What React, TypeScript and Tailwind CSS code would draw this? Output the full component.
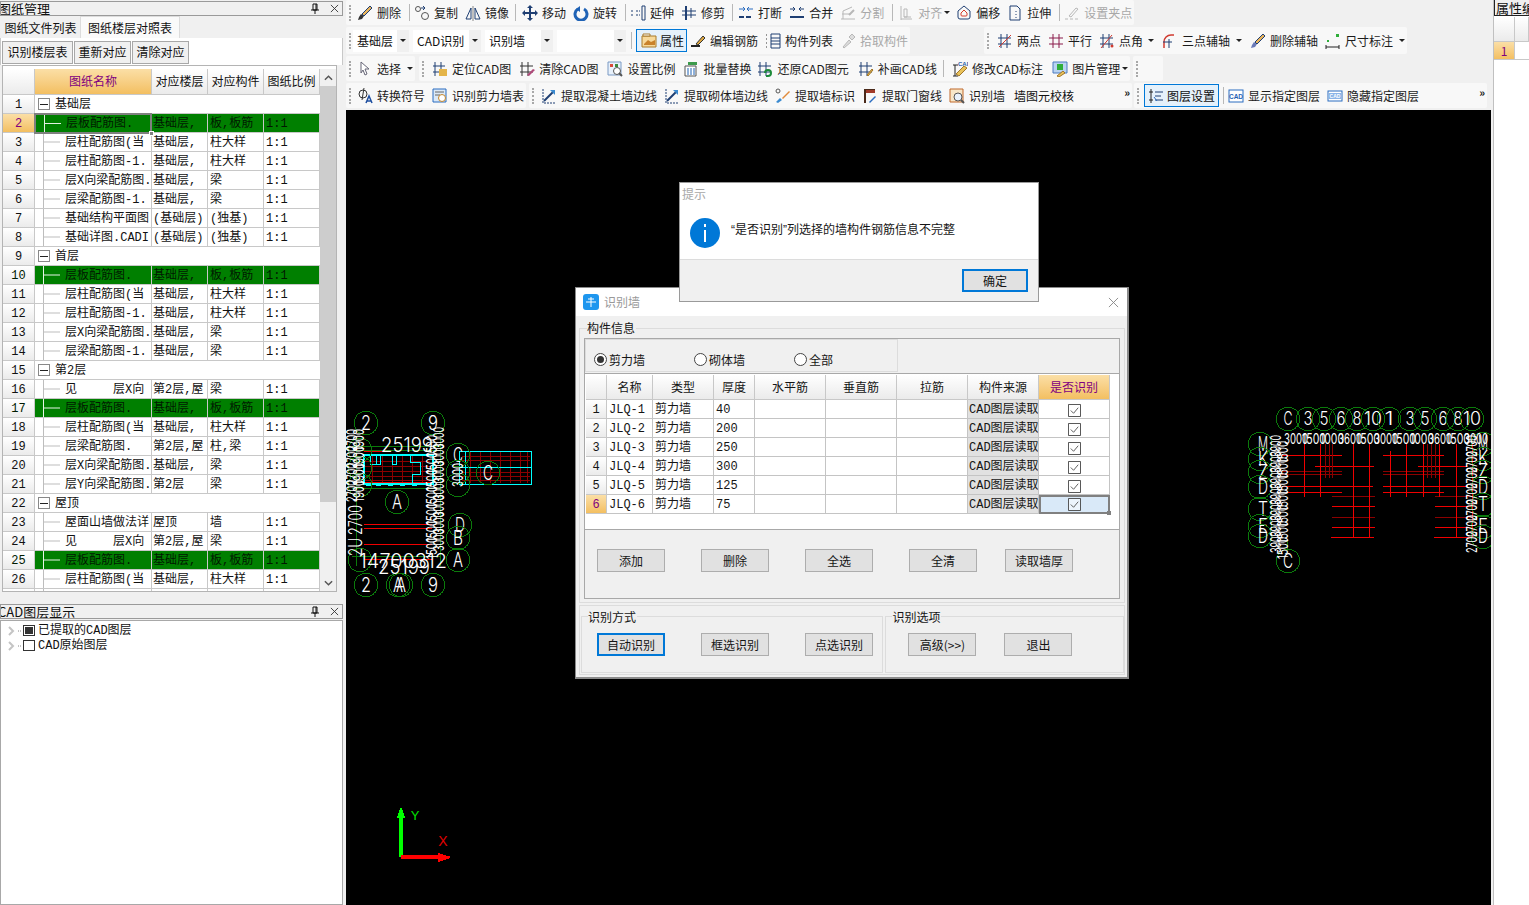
import type { ReactNode } from "react";

const NAVY = "#1f3f73";
const GREY = "#b8b8b8";

// small 16x16 toolbar drawings
const icons: Record<string, ReactNode> = {
  brush: (<><path d="M1 15l4-1 2-3-3-2-2 3z" fill="#333" /><path d="M5 9l8-8 2 2-8 8z" fill="#e8b45c" stroke={NAVY} /></>),
  copy: (<><circle cx="4" cy="4" r="2.5" fill="none" stroke="#555" /><circle cx="11" cy="11" r="3.5" fill="none" stroke="#555" /><path d="M7 3h4M9 1l2 2-2 2" stroke={NAVY} fill="none" /></>),
  mirror: (<><path d="M1 14L6 3v11zM15 14L10 3v11z" fill="none" stroke={NAVY} /><path d="M8 1v15" stroke="#888" /></>),
  move: (<path d="M8 0l3 3H9v4h4V5l3 3-3 3V9H9v4h2l-3 3-3-3h2V9H3v2L0 8l3-3v2h4V3H5z" fill={NAVY} />),
  rotate: (<><path d="M5 4a6 6 0 1 0 6 0" fill="none" stroke="#1f62b5" strokeWidth="3" /><path d="M7 1v6L3 4z" fill="#1f62b5" /></>),
  extend: (<><path d="M1 6h3M1 10h3M6 6h4M6 10h4" stroke={NAVY} strokeDasharray="2 1" /><path d="M12 1h3v14h-3z" fill="none" stroke={NAVY} /></>),
  trim: (<><path d="M5 1v14" stroke={NAVY} strokeWidth="2" /><path d="M10 3v10" stroke={NAVY} /><path d="M1 6h14M1 10h14" stroke={NAVY} /></>),
  breakl: (<><path d="M1 12h14" stroke={NAVY} strokeWidth="2" strokeDasharray="5 2" /><path d="M1 4h5M10 4h5M5 2l2 2-2 2M11 2L9 4l2 2" stroke="#2a6cc0" fill="none" /></>),
  merge: (<><path d="M1 12h14" stroke={NAVY} strokeWidth="2" /><path d="M1 4h5M10 4h5M4 2l2 2-2 2M12 2l-2 2 2 2" stroke={NAVY} fill="none" /></>),
  split: (<><path d="M1 14h14M2 9h9M3 14V6l9-4" stroke={GREY} fill="none" /><path d="M9 10l5-5" stroke={GREY} strokeWidth="2" /></>),
  align: (<path d="M3 1v14M3 14h11M6 4h3v8H6zM6 12h7" stroke={GREY} fill="none" />),
  offset: (<><path d="M8 1l6 5v6a2 2 0 0 1-2 2H4a2 2 0 0 1-2-2V6z" fill="none" stroke={NAVY} /><path d="M8 5l3 3v2a1 1 0 0 1-1 1H6a1 1 0 0 1-1-1V8z" fill="none" stroke="#d43c2c" /></>),
  stretch: (<><path d="M3 1h7l3 3v11H3z" fill="none" stroke={NAVY} /><path d="M9 6v7" stroke={NAVY} strokeDasharray="1 2" /></>),
  grip: (<><path d="M1 14h3M6 14h3M11 14h3" stroke={GREY} /><path d="M5 11l7-8 2 1-7 8z" fill="none" stroke={GREY} /></>),
  attr: (<><path d="M1 3h14v11H1z" fill="#f7d99a" stroke="#a87a2a" /><path d="M3 11l4-4 3 2 4-2v5H3z" fill="#c9822a" /><path d="M2 1h7v2H2z" fill="#fff" stroke="#a87a2a" /></>),
  rebar: (<><path d="M1 13h9" stroke="#222" strokeWidth="2" /><path d="M6 11l7-8 2 2-7 7z" fill="#e0a840" stroke="#333" /></>),
  list: (<><path d="M1 2h2M1 6h2M1 10h2M1 14h2" stroke="#333" strokeDasharray="1 1" /><path d="M6 1h9v14H6zM6 5h9M6 8h9M6 11h9" fill="none" stroke={NAVY} /></>),
  picker: (<path d="M3 14l6-7 2 2-7 6zM9 4l3-3 3 3-3 3z" fill="#ddd" stroke={GREY} />),
  twop: (<><path d="M4 1v14M10 1v14M1 5h13M1 11h13" stroke={NAVY} /><path d="M2 14L14 2" stroke="#d03a30" /></>),
  parallel: (<path d="M5 1v14M11 1v14M1 5h14M1 11h14" stroke="#8a1a4a" />),
  angle: (<><path d="M4 1v14M10 1v14M1 5h13M1 11h13" stroke={NAVY} /><path d="M2 15L13 2" stroke="#d03a30" /><circle cx="13" cy="13" r="1.5" fill="#d03a30" /></>),
  arc: (<><path d="M2 15V9a7 7 0 0 1 7-7h3" fill="none" stroke="#d03a30" strokeWidth="1.5" /><path d="M7 6v9M1 9h9" stroke={NAVY} /></>),
  delax: (<><path d="M1 15l4-1 2-3-3-2-2 3z" fill="#6a7ab8" /><path d="M5 9l8-8 2 2-8 8z" fill="#e8b45c" stroke={NAVY} /></>),
  dim: (<><path d="M1 12v4M14 12v4M1 14h13" stroke="#222" /><path d="M2 7h2v2H2zM11 1h3v3h-3z" fill="#2fae3a" /></>),
  select: (<path d="M4 1l8 7H8l2 5-2 1-2-5-2 3z" fill="#fff" stroke="#667" />),
  locate: (<><path d="M3 1v14M9 1v14M1 5h12M1 11h12" stroke={NAVY} /><path d="M7 8h8v7H7z" fill="#e4b54a" /></>),
  clear: (<><path d="M3 1v14M9 1v14M1 5h13M1 11h13" stroke="#333" /><path d="M8 14l6-6 2 1-6 6z" fill="#b04a7a" /></>),
  scale: (<><path d="M1 1h13v13H1z" fill="#e8f1fb" stroke="#7a9ac4" /><path d="M3 3h3v3H3z" fill="#d94a3a" /><path d="M8 3h3v3H8z" fill="#3c8a3c" /><circle cx="10" cy="10" r="3.5" fill="#fff" stroke="#555" /><path d="M12 12l3 3" stroke="#555" strokeWidth="2" /></>),
  batch: (<><path d="M2 5h11v10H2z" fill="#fff" stroke="#555" /><path d="M5 7v7M8 7v7M11 7v7" stroke="#1f62b5" /><path d="M5 1h9v3H5z" fill="#3c9a4c" /></>),
  restore: (<><path d="M3 1v14M9 1v14M1 5h13M1 11h13" stroke={NAVY} /><path d="M8 12a3 3 0 1 1 3 3H9" fill="none" stroke="#1d8a3a" strokeWidth="2" /></>),
  patch: (<><path d="M3 1v14M9 1v14M1 5h13M1 11h13" stroke={NAVY} /><path d="M9 14l5-6 1 1-5 6z" fill="#e4b54a" stroke="#a0762a" /></>),
  cadedit: (<><path d="M3 4v11M1 4h5M1 15h5" stroke="#222" /><path d="M4 13l8-8 3 2-8 8z" fill="#e9c25a" stroke="#a0762a" /><text x="6" y="5" fontSize="6" fontWeight="700" fill="#2a5ca8" fontFamily="'Liberation Sans', sans-serif">CAD</text></>),
  picture: (<><path d="M1 1h14v11H1z" fill="#b9d3f0" stroke="#4a7ac0" /><path d="M5 3h6v6H5z" fill="#2fae3a" /><path d="M5 15l6-5 2 2-6 4z" fill="#e9c25a" stroke="#a0762a" /></>),
  symbol: (<><circle cx="6" cy="6" r="4" fill="none" stroke="#333" /><path d="M7 0L5 12" stroke="#333" /><path d="M9 15l3-7 3 7M10 13h4" fill="none" stroke="#1f4fa0" strokeWidth="1.5" /></>),
  table: (<><path d="M1 1h13v13H1z" fill="#dbe9f8" stroke="#2a6cc0" /><path d="M3 4h9M3 7h5" stroke="#666" /><circle cx="10" cy="10" r="3.5" fill="#fff" stroke="#c4862a" /></>),
  wall: (<><path d="M2 1v14h13" fill="none" stroke={NAVY} strokeDasharray="2 1" /><path d="M3 13L13 3" stroke={NAVY} strokeWidth="2" /><path d="M9 2h5v5z" fill="#3a8ad0" /></>),
  tag: (<><circle cx="3" cy="3" r="2" fill="none" stroke="#555" /><path d="M1 14l4-4 2 2-4 3z" fill="#3a8ad0" /><path d="M7 10l7-7 1 1-7 7z" fill="#e08a3a" /></>),
  door: (<><path d="M3 15V2h10" fill="none" stroke="#4a2a1a" strokeWidth="2" /><path d="M4 2h9v3H4z" fill="#a03a2a" /><path d="M7 14l6-6 1 1-6 6z" fill="#2a6cc0" /></>),
  recog: (<><path d="M1 1h13v13H1z" fill="#f7e6c8" stroke="#c0682a" /><circle cx="9" cy="9" r="4" fill="#e8f1fb" stroke="#555" /><path d="M12 12l3 3" stroke="#555" strokeWidth="2" /></>),
  layers: (<><path d="M3 1v14M1 4h4M1 12h4" stroke="#222" /><path d="M7 4h8M7 8h6M7 12h8" stroke={NAVY} /><path d="M6 9l3 4" stroke="#2a6cc0" /></>),
  cad1: (<><rect x="1" y="2" width="14" height="12" fill="#fff" stroke="#2a6cc0" /><text x="8" y="10.5" fontSize="6.5" fontWeight="700" textAnchor="middle" fill="#1f62b5" fontFamily="'Liberation Sans', sans-serif">CAD</text></>),
  cad2: (<><rect x="1" y="3" width="14" height="10" fill="#fff" stroke="#2a6cc0" /><rect x="2" y="5" width="12" height="6" fill="#8ab4e8" /><text x="8" y="10" fontSize="5" fontWeight="700" textAnchor="middle" fill="#fff" fontFamily="'Liberation Sans', sans-serif">CAD</text></>),
};

const Ic = ({ n }: { n: string }) => (
  <svg viewBox="0 0 16 16" className="w-[16px] h-[16px] shrink-0">{icons[n]}</svg>
);

const Caret = ({ className = "" }: { className?: string }) => (
  <span className={`w-0 h-0 border-x-[3px] border-x-transparent border-t-[3px] border-t-[#222] ${className}`} />
);

const Sep = ({ className = "" }: { className?: string }) => (
  <span className={`w-px h-[17px] bg-[#b8b8b8] shrink-0 ${className}`} />
);

const Grip = () => (
  <span className="w-[2px] h-[16px] ml-[2px] shrink-0 border-l-2 border-dotted border-[#a8a8a8]" />
);

const Tool = ({ i, t, off, className = "" }: { i: string; t: string; off?: boolean; className?: string }) => (
  <span className={`flex items-center gap-[4px] shrink-0 whitespace-nowrap ${off ? "text-[#a8a8a8]" : "text-[#1c1c1c]"} ${className}`}>
    <Ic n={i} />
    {t}
  </span>
);

const Bar = ({ className = "", children }: { className?: string; children?: ReactNode }) => (
  <div className={`flex items-center h-[25px] bg-[#f8f8f8] rounded-[2px] shrink-0 ${className}`}>{children}</div>
);

const Combo = ({ t, className = "" }: { t: string; className?: string }) => (
  <span className={`flex items-center h-[22px] bg-white pl-[4px] shrink-0 ${className}`}>
    {t}
    <span className="ml-auto w-[12px] h-full bg-[#f0f0f0] flex items-center justify-center">
      <Caret />
    </span>
  </span>
);

const Toolbars = () => (
  <div className="h-[110px] shrink-0 flex flex-col pl-[3px] text-[12px] leading-none">
    <Bar className="w-[788px] mb-[2px] pl-[1px]">
      <Grip />
      <Tool i="brush" t="删除" className="ml-[6px]" />
      <Sep className="ml-[8px]" />
      <Tool i="copy" t="复制" className="ml-[4px]" />
      <Tool i="mirror" t="镜像" className="ml-[7px]" />
      <Sep className="ml-[6px]" />
      <Tool i="move" t="移动" className="ml-[6px]" />
      <Tool i="rotate" t="旋转" className="ml-[7px]" />
      <Sep className="ml-[8px]" />
      <Tool i="extend" t="延伸" className="ml-[4px]" />
      <Tool i="trim" t="修剪" className="ml-[7px]" />
      <Sep className="ml-[7px]" />
      <Tool i="breakl" t="打断" className="ml-[5px]" />
      <Tool i="merge" t="合并" className="ml-[7px]" />
      <Tool i="split" t="分割" off className="ml-[7px]" />
      <Sep className="ml-[8px]" />
      <Tool i="align" t="对齐" off className="ml-[5px]" />
      <Caret className="ml-[2px]" />
      <Tool i="offset" t="偏移" className="ml-[6px]" />
      <Tool i="stretch" t="拉伸" className="ml-[7px]" />
      <Sep className="ml-[8px]" />
      <Tool i="grip" t="设置夹点" off className="ml-[4px]" />
    </Bar>
    <div className="flex h-[27px] mb-[2px]">
      <Bar className="h-[27px] w-[564px] pl-[1px]">
        <Grip />
        <Combo t="基础层" className="w-[56px] ml-[2px]" />
        <Combo t="CAD识别" className="w-[68px] ml-[4px]" />
        <Combo t="识别墙" className="w-[68px] ml-[4px]" />
        <Combo t="" className="w-[69px] ml-[4px]" />
        <Sep className="ml-[5px]" />
        <span className="flex items-center gap-[3px] ml-[4px] w-[51px] h-[23px] pl-[4px] border border-[#0078d7] bg-[#e5f1fb] shrink-0">
          <Ic n="attr" />
          属性
        </span>
        <Tool i="rebar" t="编辑钢筋" className="ml-[3px]" />
        <Tool i="list" t="构件列表" className="ml-[7px]" />
        <Tool i="picker" t="拾取构件" off className="ml-[7px]" />
      </Bar>
      <Bar className="h-[27px] w-[423px] ml-[74px] pl-[1px]">
        <Grip />
        <Tool i="twop" t="两点" className="ml-[8px]" />
        <Tool i="parallel" t="平行" className="ml-[7px]" />
        <Tool i="angle" t="点角" className="ml-[7px]" />
        <Caret className="ml-[5px]" />
        <Tool i="arc" t="三点辅轴" className="ml-[8px]" />
        <Caret className="ml-[6px]" />
        <Tool i="delax" t="删除辅轴" className="ml-[8px]" />
        <Tool i="dim" t="尺寸标注" className="ml-[7px]" />
        <Caret className="ml-[6px]" />
      </Bar>
    </div>
    <div className="flex h-[25px] mb-[2px]">
      <Bar className="w-[69px] pl-[1px]">
        <Grip />
        <Tool i="select" t="选择" className="ml-[6px]" />
        <Caret className="ml-[6px]" />
      </Bar>
      <Bar className="w-[711px] ml-[4px] pl-[1px]">
        <Grip />
        <Tool i="locate" t="定位CAD图" className="ml-[8px]" />
        <Tool i="clear" t="清除CAD图" className="ml-[8px]" />
        <Tool i="scale" t="设置比例" className="ml-[9px]" />
        <Tool i="batch" t="批量替换" className="ml-[8px]" />
        <Tool i="restore" t="还原CAD图元" className="ml-[6px]" />
        <Tool i="patch" t="补画CAD线" className="ml-[9px]" />
        <Sep className="ml-[6px]" />
        <Tool i="cadedit" t="修改CAD标注" className="ml-[8px]" />
        <Tool i="picture" t="图片管理" className="ml-[9px]" />
        <Caret className="ml-[2px]" />
      </Bar>
      <Bar className="w-[30px] ml-[3px] pl-[1px]">
        <Grip />
      </Bar>
    </div>
    <div className="flex h-[25px]">
      <Bar className="w-[180px] pl-[1px]">
        <Grip />
        <Tool i="symbol" t="转换符号" className="ml-[6px]" />
        <Tool i="table" t="识别剪力墙表" className="ml-[7px]" />
      </Bar>
      <Bar className="w-[603px] ml-[3px] pl-[1px]">
        <Grip />
        <Tool i="wall" t="提取混凝土墙边线" className="ml-[7px]" />
        <Tool i="wall" t="提取砌体墙边线" className="ml-[7px]" />
        <Tool i="tag" t="提取墙标识" className="ml-[7px]" />
        <Tool i="door" t="提取门窗线" className="ml-[7px]" />
        <Tool i="recog" t="识别墙" className="ml-[7px]" />
        <span className="ml-[9px] whitespace-nowrap shrink-0">墙图元校核</span>
        <span className="ml-auto mr-[2px] mb-[6px] font-bold text-[11px]">»</span>
      </Bar>
      <Bar className="w-[353px] ml-[2px] pl-[1px]">
        <Grip />
        <span className="flex items-center gap-[3px] ml-[5px] w-[75px] h-[23px] pl-[3px] border border-[#0078d7] bg-[#e5f1fb] shrink-0">
          <Ic n="layers" />
          图层设置
        </span>
        <Sep className="ml-[4px]" />
        <Tool i="cad1" t="显示指定图层" className="ml-[4px]" />
        <Tool i="cad2" t="隐藏指定图层" className="ml-[7px]" />
        <span className="ml-auto mr-[2px] mb-[6px] font-bold text-[11px]">»</span>
      </Bar>
    </div>
  </div>
);

type Row = { g?: string; n?: string; f?: string; c?: string; on?: boolean };

const plate = { n: "层板配筋图.", f: "基础层,", c: "板,板筋", on: true };
const col = { n: "层柱配筋图(当", f: "基础层,", c: "柱大样" };
const col1 = { n: "层柱配筋图-1.", f: "基础层,", c: "柱大样" };
const xb = { n: "层X向梁配筋图.", f: "基础层,", c: "梁" };
const b1 = { n: "层梁配筋图-1.", f: "基础层,", c: "梁" };
const seen = { n: "见     层X向", f: "第2层,屋", c: "梁" };

const rows: Row[] = [
  { g: "基础层" }, plate, col, col1, xb, b1,
  { n: "基础结构平面图", f: "(基础层)", c: "(独基)" },
  { n: "基础详图.CADI", f: "(基础层)", c: "(独基)" },
  { g: "首层" }, plate, col, col1, xb, b1,
  { g: "第2层" }, seen, plate, col,
  { n: "层梁配筋图.", f: "第2层,屋", c: "柱,梁" },
  xb,
  { n: "层Y向梁配筋图.", f: "第2层", c: "梁" },
  { g: "屋顶" },
  { n: "屋面山墙做法详", f: "屋顶", c: "墙" },
  seen, plate, col,
  { n: "层梁配筋图.", f: "第2层,屋", c: "柱,梁" },
];

const headCell = "flex items-center justify-center border-r border-b border-[#c8c8c8] bg-gradient-to-b from-white to-[#ebebeb]";
const orangeCell = "flex items-center justify-center border-r border-b border-[#c8c8c8] bg-gradient-to-b from-[#fbdfa6] to-[#f3bf60] text-[#800080]";
const gridCell = "flex items-center pt-[2px] overflow-hidden whitespace-pre border-r border-b border-[#c8c8c8]";

const Title = ({ t, className = "" }: { t: string; className?: string }) => (
  <div className={`flex items-center h-[15px] border border-[#9a9a9a] text-[13px] leading-none overflow-hidden shrink-0 ${className}`}>
    <span className="flex-1 whitespace-nowrap -ml-[3px]">{t}</span>
    <svg viewBox="0 0 10 12" className="w-[10px] h-[12px] mr-[10px]">
      <path d="M3 1h4v6H3zM1 7h8M5 7v4M6 1v6" stroke="#111" fill="none" />
    </svg>
    <svg viewBox="0 0 10 10" className="w-[9px] h-[9px] mr-[3px]">
      <path d="M1 1l8 8M9 1L1 9" stroke="#333" />
    </svg>
  </div>
);

const TreeLines = ({ on, className = "h-[18px] -mt-[2px]" }: { on?: boolean; className?: string }) => (
  <svg viewBox="0 0 30 18" preserveAspectRatio="none" className={`w-[30px] shrink-0 ${className}`}>
    <path d="M8.5 0v18M9 9h16" stroke={on ? "#e8f4e8" : "#bdbdbd"} />
  </svg>
);

const rowCols = "grid grid-cols-[32px_117px_56px_56px_56px] grid-rows-[19px] h-[19px]";

const LeftPanel = () => (
  <aside className="w-[343px] shrink-0 h-full flex flex-col pt-px text-[12px] leading-none">
    <Title t="图纸管理" />
    <div className="flex items-end h-[22px] pl-[1px] shrink-0">
      <span className="w-[79px] h-[20px] flex items-center justify-center">图纸文件列表</span>
      <span className="w-[100px] h-[22px] flex items-center justify-center bg-[#fafafa] border-x border-t border-[#dcdcdc]">图纸楼层对照表</span>
    </div>
    <div className="h-[27px] bg-white border-x border-[#c8c8c8] flex items-center pl-[1px] pt-px gap-px shrink-0">
      {[["识别楼层表", "w-[71px]"], ["重新对应", "w-[57px]"], ["清除对应", "w-[57px]"]].map(([t, w]) => (
        <span key={t} className={`${w} h-[23px] flex items-center justify-center bg-[#f0f0f0] border border-[#a8a8a8]`}>{t}</span>
      ))}
    </div>
    <div className="h-[527px] ml-[2px] w-[335px] border border-[#b4b4b4] bg-white flex overflow-hidden pt-[3px] shrink-0 [font-family:'Liberation_Mono','Noto_Sans_CJK_SC',monospace]">
      <div className="w-[317px] shrink-0 overflow-hidden">
        <div className="grid grid-cols-[32px_117px_56px_56px_56px] h-[26px] [font-family:'Noto_Sans_CJK_SC',sans-serif]">
          <span className={headCell} />
          <span className={`${orangeCell} pb-[2px]`}>图纸名称</span>
          <span className={`${headCell} pb-[2px]`}>对应楼层</span>
          <span className={`${headCell} pb-[2px]`}>对应构件</span>
          <span className={`${headCell} pb-[2px]`}>图纸比例</span>
        </div>
        {rows.map((r, i) => (
          <div key={i} className={`${rowCols} ${r.on ? "bg-[#007f00] text-[#001a00]" : "text-[#111]"}`}>
            <span className={`${i === 1 ? orangeCell : headCell} pt-[2px]`}>{i + 1}</span>
            {r.g ? (
              <span className="col-span-4 flex items-center gap-[5px] pl-[3px] pt-[2px] border-b border-[#c8c8c8]">
                <span className="w-[12px] h-[12px] -mt-[2px] border border-[#888] flex items-center justify-center">
                  <span className="w-[8px] h-px bg-[#222]" />
                </span>
                {r.g}
              </span>
            ) : (
              <>
                {i === 1 ? (
                  <span className="relative flex items-center whitespace-pre -ml-px -mt-px h-[21px] border-2 border-[#808080]">
                    <TreeLines on={r.on} className="h-[17px]" />
                    {r.n}
                    <span className="absolute -right-[4px] -bottom-[4px] w-[5px] h-[5px] bg-[#808080] border border-white" />
                  </span>
                ) : (
                  <span className={gridCell}>
                    <TreeLines on={r.on} />
                    {r.n}
                  </span>
                )}
                <span className={`${gridCell} pl-px`}>{r.f}</span>
                <span className={`${gridCell} pl-[2px]`}>{r.c}</span>
                <span className={`${gridCell} pl-[2px]`}>1:1</span>
              </>
            )}
          </div>
        ))}
      </div>
      <div className="w-[16px] shrink-0 flex flex-col bg-[#f0f0f0]">
        <span className="h-[17px] flex items-center justify-center shrink-0">
          <svg viewBox="0 0 10 6" className="w-[9px] h-[6px]"><path d="M1 5l4-4 4 4" fill="none" stroke="#555" strokeWidth="1.6" /></svg>
        </span>
        <span className="h-[416px] bg-[#cdcdcd] shrink-0" />
        <span className="flex-1" />
        <span className="h-[17px] flex items-center justify-center shrink-0">
          <svg viewBox="0 0 10 6" className="w-[9px] h-[6px]"><path d="M1 1l4 4 4-4" fill="none" stroke="#555" strokeWidth="1.6" /></svg>
        </span>
      </div>
    </div>
    <Title t="CAD图层显示" className="mt-[12px]" />
    <div className="flex-1 mt-px bg-white border border-[#a8a8a8] pl-[7px] pt-[2px] [font-family:'Liberation_Mono','Noto_Sans_CJK_SC',monospace]">
      {[{ t: "已提取的CAD图层", on: true }, { t: "CAD原始图层", on: false }].map((l) => (
        <div key={l.t} className="flex items-center h-[15px] gap-[1px]">
          <svg viewBox="0 0 14 10" className="w-[14px] h-[10px] shrink-0">
            <path d="M1 1l4 4-4 4" fill="none" stroke="#c4c4c4" strokeWidth="2" />
            <path d="M10 5h3" stroke="#888" strokeDasharray="1 1" />
          </svg>
          <span className="w-[12px] h-[11px] border border-[#333] flex items-center justify-center mr-[2px] shrink-0">
            {l.on && <span className="w-[8px] h-[7px] bg-[#333]" />}
          </span>
          <span className="whitespace-nowrap">{l.t}</span>
        </div>
      ))}
    </div>
  </aside>
);

const Oct = ({ x, y, r = 12 }: { x: number; y: number; r?: number }) => {
  const pts = Array.from({ length: 12 }, (_, i) => {
    const a = (i * Math.PI) / 6 + 0.26;
    return `${(x + r * Math.cos(a)).toFixed(1)},${(y + r * Math.sin(a)).toFixed(1)}`;
  }).join(" ");
  return <polygon points={pts} fill="none" stroke="#0b7a0b" />;
};

// CAD annotation: thin white text squeezed to the given width
const T = ({ x, y, s = 20, r, w, children }: { x: number; y: number; s?: number; r?: number; w?: number; children: string }) => (
  <text
    x={x}
    y={y}
    fontSize={s}
    fill="#fff"
    fontFamily="Inter, 'Liberation Sans', sans-serif"
    fontWeight={s <= 15 ? 400 : 300}
    textAnchor="middle"
    textLength={w ?? children.length * s * 0.5}
    lengthAdjust="spacingAndGlyphs"
    transform={r ? `rotate(${r} ${x} ${y})` : undefined}
  >
    {children}
  </text>
);

const HL = ({ a, b, y, c = "#f00000", sw = 1 }: { a: number; b: number; y: number; c?: string; sw?: number }) => (
  <line x1={a} x2={b} y1={y} y2={y} stroke={c} strokeWidth={sw} />
);
const VL = ({ x, a, b, c = "#f00000", sw = 1 }: { x: number; a: number; b: number; c?: string; sw?: number }) => (
  <line x1={x} x2={x} y1={a} y2={b} stroke={c} strokeWidth={sw} />
);

const DARK = "#8c0000";
const CYAN = "#00ffff";
const RED = "#f00000";

const leftCircles: [number, number, string][] = [
  [366, 423, "2"], [433, 423, "9"], [366, 585, "2"], [398, 585, "A"], [401, 585, "A"], [433, 585, "9"],
  [397, 502, "A"], [458, 455, "C"], [458, 472, ""], [458, 485, ""], [460, 525, "D"], [458, 538, "B"], [458, 560, "A"],
  [360, 450, ""], [360, 468, ""], [360, 485, ""], [360, 560, ""], [488, 473, "C"],
];

const topCircles: [number, string][] = [
  [1288, "C"], [1308, "3"], [1324, "5"], [1341, "6"], [1357, "8"], [1373, "10"],
  [1389, "1"], [1410, "3"], [1425, "5"], [1443, "6"], [1458, "8"], [1472, "10"],
];

// right block red grid: [x1, x2, y, colour]
const gridH: [number, number, number, string][] = [
  [1282, 1342, 455, RED], [1315, 1374, 466, RED], [1282, 1342, 471, DARK], [1282, 1342, 474, DARK],
  [1282, 1373, 486, RED], [1286, 1342, 492, RED], [1332, 1375, 496, DARK], [1332, 1375, 506, RED],
  [1332, 1375, 517, DARK], [1332, 1375, 527, RED], [1331, 1374, 537, RED],
  [1383, 1444, 455, RED], [1418, 1468, 466, RED], [1383, 1444, 471, DARK], [1383, 1444, 474, DARK],
  [1383, 1468, 486, RED], [1383, 1444, 492, RED], [1435, 1471, 496, DARK], [1435, 1471, 506, RED],
  [1435, 1471, 517, DARK], [1435, 1471, 527, RED], [1434, 1471, 537, RED],
];
const gridV: [number, number, number, string][] = [
  [1304, 444, 497, RED], [1320, 444, 497, RED], [1325, 444, 478, DARK], [1329, 444, 478, DARK], [1332, 444, 478, DARK],
  [1353, 444, 537, RED], [1369, 444, 537, RED],
  [1390, 451, 497, RED], [1406, 444, 497, RED], [1423, 444, 497, RED], [1427, 444, 478, DARK], [1431, 444, 478, DARK],
  [1435, 444, 478, DARK], [1439, 444, 497, RED], [1456, 444, 537, RED], [1472, 444, 537, RED],
];

const topNumbers = ["3000", "1500", "1000", "3600", "1500", "3000", "1500", "1000", "3600", "1500", "3000"];

const CadDrawing = () => (
  <svg viewBox="346 110 1145 795" className="absolute inset-0 w-full h-full" shapeRendering="crispEdges">
    {/* left block */}
    {[446, 450, 488, 556].map((y) => <HL key={y} a={352} b={440} y={y} c="#0b7a0b" />)}
    <VL x={356} a={436} b={566} c="#0b7a0b" />
    <VL x={440} a={436} b={566} c="#0b7a0b" />
    {[461, 466, 471, 476, 480].map((y) => <HL key={y} a={365} b={430} y={y} c={DARK} />)}
    {[372, 382, 392, 402, 412, 422].map((x) => <VL key={x} x={x} a={456} b={483} c={DARK} />)}
    {[524, 528, 544, 559].map((y) => <HL key={y} a={364} b={432} y={y} />)}
    <HL a={364} b={432} y={482} />
    <HL a={364} b={385} y={451} />
    <rect x="363.5" y="454.5" width="69" height="29" fill="none" stroke={CYAN} strokeWidth="2" />
    <path d="M370 455v9h10v-9M376 455v9M392 455v9h4v-9M410 455v7h10v12h-8v9" fill="none" stroke={CYAN} />
    {[366, 376, 388, 400, 412].map((x) => <rect key={x} x={x} y={484} width={5} height={2} fill={CYAN} />)}
    {[456, 460, 472, 476, 480].map((y) => <HL key={y} a={462} b={530} y={y} c={DARK} />)}
    {[470, 480, 490, 500, 510, 520, 527].map((x) => <VL key={x} x={x} a={452} b={483} c={DARK} />)}
    <rect x="459.5" y="451.5" width="72" height="33" fill="none" stroke={CYAN} strokeWidth="1.5" />
    <HL a={460} b={532} y={467} c={CYAN} />
    <VL x={465} a={452} b={484} c={CYAN} />
    {leftCircles.map(([x, y, t], i) => (
      <g key={i}>
        <Oct x={x} y={y} />
        {t && <T x={x} y={y + 7}>{t}</T>}
      </g>
    ))}
    <T x={407} y={452} w={52}>25199</T>
    <T x={404} y={574} w={52}>25199</T>
    <T x={403} y={568} w={88}>14700312</T>
    {[440, 457, 474, 491].map((y) => <T key={y} x={357} y={y} s={15} r={-90} w={22}>2700</T>)}
    {[440, 457, 474, 491].map((y) => <T key={y} x={364} y={y} s={15} r={-90} w={22}>1900</T>)}
    <T x={362} y={520} s={18} r={-90} w={30}>2700</T>
    <T x={362} y={547} s={18} r={-90} w={18}>2U</T>
    {[446, 463, 480, 497, 514, 531, 548].map((y) => <T key={y} x={437} y={y} s={15} r={-90} w={22}>1500</T>)}
    {[438, 455, 472, 489, 506, 523, 540].map((y) => <T key={y} x={444} y={y} s={15} r={-90} w={22}>3000</T>)}
    <T x={463} y={475} s={15} r={-90} w={24}>3000</T>

    {/* right block */}
    {gridH.map(([a, b, y, c], i) => <HL key={i} a={a} b={b} y={y} c={c} />)}
    {gridV.map(([x, a, b, c], i) => <VL key={i} x={x} a={a} b={b} c={c} />)}
    {topCircles.map(([x, t]) => (
      <g key={x}>
        <Oct x={x} y={419} />
        <T x={x} y={425} s={18}>{t}</T>
      </g>
    ))}
    {[444, 459, 472, 487, 509, 526, 536].map((y, i) => (
      <g key={y}>
        <Oct x={1260} y={y} />
        <T x={1263} y={y + 7}>{["M", "K", "Z", "D", "T", "E", "D"][i]}</T>
      </g>
    ))}
    {[444, 459, 472, 488, 505, 527, 537].map((y, i) => (
      <g key={y}>
        <Oct x={1483} y={y} />
        <T x={1483} y={y + 6}>{["M", "K", "Z", "D", "T", "E", "D"][i]}</T>
      </g>
    ))}
    <VL x={1287} a={540} b={551} c="#0b7a0b" />
    <Oct x={1288} y={561} />
    <T x={1288} y={568}>C</T>
    {topNumbers.map((n, i) => <T key={i} x={1296 + i * 18} y={444} s={15} w={24}>{n}</T>)}
    {[446, 462, 478, 494, 510, 526, 542].map((y) => (
      <g key={y}>
        <T x={1281} y={y} s={15} r={-90} w={22}>3900</T>
        <T x={1288} y={y + 6} s={15} r={-90} w={22}>1500</T>
        <T x={1477} y={y} s={15} r={-90} w={22}>2700</T>
      </g>
    ))}
    {/* axes */}
    <path d="M399 857v-39h-2l3-10h2l3 10h-2v39z" fill="#00ff00" />
    <path d="M401 855h37v-2l10 3h2v2l-12 4v-3h-37z" fill="#ff0000" />
    <text x="415" y="820" fontSize="13" fill="#00e000" textAnchor="middle" fontFamily="'Liberation Sans', sans-serif">Y</text>
    <text x="443" y="846" fontSize="14" fill="#e00000" textAnchor="middle" fontFamily="'Liberation Sans', sans-serif">X</text>
  </svg>
);

const Btn = ({ t, blue, className = "" }: { t: string; blue?: boolean; className?: string }) => (
  <span className={`w-[68px] h-[23px] flex items-center justify-center bg-[#e1e1e1] shrink-0 ${blue ? "border-2 border-[#0078d7]" : "border border-[#adadad]"} ${className}`}>{t}</span>
);

const Check = () => (
  <svg viewBox="0 0 14 14" className="w-[13px] h-[13px]">
    <path d="M.5.5h13v13H.5z" fill="#fff" fillOpacity="0.5" stroke="#444" />
    <path d="M3 7l3 3 5-6" fill="none" stroke="#555" />
  </svg>
);

const wallCols = "grid grid-cols-[21px_46px_61px_41px_71px_71px_71px_71px_71px]";
const walls = [["JLQ-1", "40"], ["JLQ-2", "200"], ["JLQ-3", "250"], ["JLQ-4", "300"], ["JLQ-5", "125"], ["JLQ-6", "75"]];
const cell = "flex items-center pt-[2px] border-r border-b border-[#c4c4c4] whitespace-nowrap overflow-hidden";

const WallDialog = () => (
  <div className="absolute left-[229px] top-[177px] w-[554px] h-[392px] bg-white border border-[#8a8a8a] border-r-2 border-b-2 flex flex-col text-[12px] leading-none text-[#151515]">
    <div className="h-[28px] flex items-center pl-[7px] shrink-0">
      <svg viewBox="0 0 16 16" className="w-[16px] h-[16px]">
        <rect width="16" height="16" rx="3" fill="#1e96ee" />
        <path d="M8 3v10M3 8h10M5 5h6" stroke="#fff" fill="none" />
      </svg>
      <span className="ml-[5px] text-[#999]">识别墙</span>
      <svg viewBox="0 0 12 12" className="w-[11px] h-[11px] ml-auto mr-[8px]"><path d="M1 1l10 10M11 1L1 11" stroke="#888" /></svg>
    </div>
    <div className="flex-1 bg-[#f0f0f0] flex flex-col pl-[3px] pr-[2px] min-h-0">
      <div className="relative h-[275px] mt-[12px] border border-[#dcdcdc] p-[4px] pt-[9px] shrink-0">
        <span className="absolute left-[7px] -top-[7px] bg-[#f0f0f0] pr-[1px]">构件信息</span>
        <div className="h-[261px] border border-[#a8a8a8] flex flex-col">
          <div className="w-[313px] h-[33px] border border-[#dcdcdc] flex items-end pb-[5px] pl-[8px] shrink-0">
            {["剪力墙", "砌体墙", "全部"].map((t, i) => (
              <span key={t} className="flex items-center w-[100px] gap-[2px]">
                <span className="w-[13px] h-[13px] rounded-full border border-[#444] bg-white flex items-center justify-center">
                  {i === 0 && <span className="w-[7px] h-[7px] rounded-full bg-[#333]" />}
                </span>
                {t}
              </span>
            ))}
          </div>
          <div className="h-[157px] mt-[1px] bg-white border-y border-[#a8a8a8] pl-[1px] pt-px shrink-0 [font-family:'Liberation_Mono','Noto_Sans_CJK_SC',monospace]">
            <div className={`${wallCols} h-[25px] [font-family:'Noto_Sans_CJK_SC',sans-serif]`}>
              <span className={headCell} />
              {["名称", "类型", "厚度", "水平筋", "垂直筋", "拉筋", "构件来源"].map((t) => <span key={t} className={headCell}>{t}</span>)}
              <span className={orangeCell}>是否识别</span>
            </div>
            {walls.map(([n, d], i) => (
              <div key={n} className={`${wallCols} h-[19px]`}>
                <span className={`${i === 5 ? orangeCell : headCell} pt-[2px]`}>{i + 1}</span>
                <span className={`${cell} pl-[2px]`}>{n}</span>
                <span className={`${cell} pl-[2px]`}>剪力墙</span>
                <span className={`${cell} pl-[2px]`}>{d}</span>
                <span className={cell} />
                <span className={cell} />
                <span className={cell} />
                <span className={`${cell} bg-[#e1e1e1] pl-px`}>CAD图层读取</span>
                {i === 5 ? (
                  <span className="relative flex items-center justify-center bg-[#d9e9f8] border-2 border-[#808080]">
                    <Check />
                    <span className="absolute -right-[3px] -bottom-[3px] w-[4px] h-[4px] bg-[#808080]" />
                  </span>
                ) : (
                  <span className={`${cell} justify-center`}><Check /></span>
                )}
              </div>
            ))}
          </div>
          <div className="flex items-center gap-[36px] pl-[12px] pt-[19px]">
            <Btn t="添加" />
            <Btn t="删除" />
            <Btn t="全选" />
            <Btn t="全清" />
            <Btn t="读取墙厚" className="-ml-[8px]" />
          </div>
        </div>
      </div>
      <div className="flex h-[70px] mt-[2px] border border-[#dcdcdc] pt-[10px] pl-[1px] shrink-0">
        <div className="relative w-[303px] h-[57px] border border-[#dcdcdc] flex items-center gap-[36px] pl-[15px]">
          <span className="absolute left-[6px] -top-[6px] bg-[#f0f0f0] pr-[1px]">识别方式</span>
          <Btn t="自动识别" blue />
          <Btn t="框选识别" />
          <Btn t="点选识别" />
        </div>
        <div className="relative w-[239px] h-[57px] ml-[2px] border border-[#dcdcdc] flex items-center gap-[28px] pl-[22px]">
          <span className="absolute left-[6px] -top-[6px] bg-[#f0f0f0] pr-[1px]">识别选项</span>
          <Btn t="高级(>>)" />
          <Btn t="退出" />
        </div>
      </div>
    </div>
  </div>
);

const AlertDialog = () => (
  <div className="absolute left-[333px] top-[72px] w-[360px] h-[120px] bg-white border border-[#9a9a9a] flex flex-col text-[12px] leading-none text-[#151515]">
    <span className="h-[21px] pl-[2px] pt-[5px] text-[#a8a8a8] shrink-0">提示</span>
    <div className="flex items-center h-[55px] pl-[10px] pt-[3px] shrink-0">
      <span className="w-[30px] h-[30px] rounded-full bg-[#0078d7] flex items-center justify-center">
        <svg viewBox="0 0 4 18" className="w-[4px] h-[18px]"><path d="M2 0v3M2 6v12" stroke="#fff" strokeWidth="2" /></svg>
      </span>
      <span className="ml-[11px] mb-[6px] whitespace-nowrap [font-family:'Liberation_Sans','Noto_Sans_CJK_SC',sans-serif]">“是否识别”列选择的墙构件钢筋信息不完整</span>
    </div>
    <div className="flex-1 bg-[#f0f0f0] border-t border-[#dcdcdc] flex justify-end items-start pt-[9px] pr-[10px]">
      <span className="w-[66px] h-[23px] flex items-center justify-center bg-[#e1e1e1] border-2 border-[#0078d7]">确定</span>
    </div>
  </div>
);

const RightPanel = () => (
  <aside className="w-[36px] shrink-0 h-full bg-white ml-[2px] border-l border-[#c0c0c0] overflow-hidden text-[12px] leading-none">
    <div className="h-[16px] bg-[#f0f0f0] border-b border-l border-[#222] flex items-center whitespace-nowrap pl-px text-[13px]">属性编辑</div>
    <div className="grid grid-cols-[21px_1fr] h-[25px] mt-px">
      <span className={headCell} />
      <span className={headCell} />
    </div>
    <div className="grid grid-cols-[21px_1fr] h-[18px]">
      <span className={orangeCell}>1</span>
      <span className="border-b border-[#c8c8c8]" />
    </div>
  </aside>
);

export default function App() {
  return (
    <div className="w-[1529px] h-[905px] flex bg-[#f0f0f0] overflow-hidden text-[#111] [font-family:'Noto_Sans_CJK_SC',sans-serif]">
      <LeftPanel />
      <main className="w-[1148px] shrink-0 h-full flex flex-col">
        <Toolbars />
        <div className="relative flex-1 ml-[3px] bg-black">
          <CadDrawing />
          <WallDialog />
          <AlertDialog />
        </div>
      </main>
      <RightPanel />
    </div>
  );
}
